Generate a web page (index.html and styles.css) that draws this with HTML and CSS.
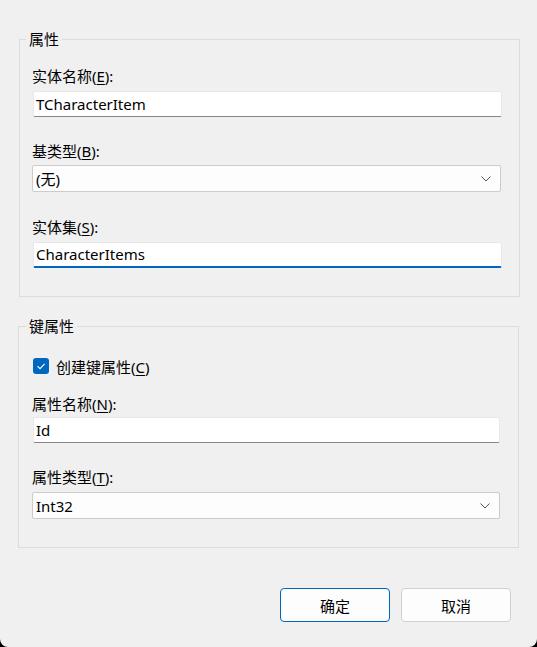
FILE: index.html
```html
<!DOCTYPE html>
<html lang="zh-CN">
<head>
<meta charset="utf-8">
<link rel="stylesheet" href="styles.css">
</head>
<body>
<div class="window">
  <fieldset class="group group-props">
    <legend>属性</legend>
    <label class="lbl lbl-1">实体名称(<u>E</u>):</label>
    <div class="textbox">TCharacterItem</div>
    <label class="lbl lbl-2">基类型(<u>B</u>):</label>
    <div class="combo"><span>(无)</span><svg class="chev" width="10" height="6" viewBox="0 0 10 6"><path d="M0.5 0.5 L5 5 L9.5 0.5" fill="none" stroke="#555" stroke-width="1"/></svg></div>
    <label class="lbl lbl-3">实体集(<u>S</u>):</label>
    <div class="textbox focused">CharacterItems</div>
  </fieldset>

  <fieldset class="group group-key">
    <legend>键属性</legend>
    <div class="check-row">
      <span class="checkbox"><svg width="16" height="16" viewBox="0 0 16 16"><path d="M4.5 8.2 L7 10.6 L11.6 5.8" fill="none" stroke="#fff" stroke-width="1.1"/></svg></span>
      <span class="check-text">创建键属性(<u>C</u>)</span>
    </div>
    <label class="lbl lbl-4">属性名称(<u>N</u>):</label>
    <div class="textbox">Id</div>
    <label class="lbl lbl-5">属性类型(<u>T</u>):</label>
    <div class="combo"><span>Int32</span><svg class="chev" width="10" height="6" viewBox="0 0 10 6"><path d="M0.5 0.5 L5 5 L9.5 0.5" fill="none" stroke="#555" stroke-width="1"/></svg></div>
  </fieldset>

  <div class="buttons">
    <button class="btn btn-default">确定</button>
    <button class="btn">取消</button>
  </div>
</div>
</body>
</html>
```

FILE: styles.css
```css
html, body {
  margin: 0;
  padding: 0;
  background: #000;
}
body {
  width: 537px;
  height: 647px;
  overflow: hidden;
  font-family: "Noto Sans", "Noto Sans CJK SC", sans-serif;
  font-size: 15px;
  color: #000;
}
.window {
  width: 537px;
  height: 647px;
  background: #f0f0f0;
  border-radius: 0 0 8px 8px;
  box-sizing: border-box;
  padding-top: 29px;
  display: flex;
  flex-direction: column;
}
.group {
  border: 1px solid #dcdcdc;
  margin: 0;
  box-sizing: border-box;
  width: 501px;
  display: flex;
  flex-direction: column;
  min-width: 0;
  flex: none;
}
.group legend {
  padding: 0 3px;
  margin-left: -7px;
  line-height: 20px;
  height: 20px;
}
.group-props {
  margin-left: 19px;
  height: 268px;
  padding: 17px 18px 0 13px;
}
.group-key {
  margin-left: 18px;
  margin-top: 19px;
  height: 232px;
  padding: 20px 18px 0 14px;
}
.lbl {
  display: block;
  line-height: 20px;
  height: 20px;
  margin-left: -1px;
  white-space: nowrap;
}
.lbl-1 { margin-bottom: 5px; }
.lbl-2 { margin-top: 24px; margin-bottom: 4px; }
.lbl-3 { margin-top: 25px; margin-bottom: 5px; }
.lbl-4 { margin-top: 18px; margin-bottom: 3px; }
.lbl-5 { margin-top: 24px; margin-bottom: 5px; }
.lbl u, .check-text u { text-decoration-thickness: 1px; text-underline-offset: 2px; }

.textbox {
  height: 26px;
  box-sizing: border-box;
  background: #fff;
  border: 1px solid #e8e8e8;
  border-bottom: 1px solid #868686;
  border-radius: 2px;
  padding: 0 0 0 2px;
  line-height: 24px;
  white-space: nowrap;
}
.group-props .textbox { margin-right: -1px; }
.textbox.focused {
  border-bottom: 2px solid #0067c0;
  line-height: 23px;
}
.combo {
  height: 27px;
  box-sizing: border-box;
  background: #fdfdfd;
  border: 1px solid #cccccc;
  border-radius: 2px;
  padding: 0 9px 0 3px;
  display: flex;
  align-items: center;
  justify-content: space-between;
  margin-left: -1px;
}
.chev { display: block; }

.check-row {
  display: flex;
  align-items: center;
  height: 20px;
  gap: 7px;
}
.checkbox {
  width: 16px;
  height: 16px;
  border-radius: 3px;
  background: #0067c0;
  display: block;
  flex: none;
}
.checkbox svg { display: block; }

.buttons {
  display: flex;
  justify-content: flex-end;
  gap: 11px;
  margin-top: 40px;
  padding-right: 26px;
}
.btn {
  width: 110px;
  height: 34px;
  box-sizing: border-box;
  background: #fdfdfd;
  border: 1px solid #d0d0d0;
  border-radius: 4px;
  font-family: inherit;
  font-size: 15px;
  color: #000;
  padding: 0;
}
.btn-default {
  border-color: #0067c0;
}
```
